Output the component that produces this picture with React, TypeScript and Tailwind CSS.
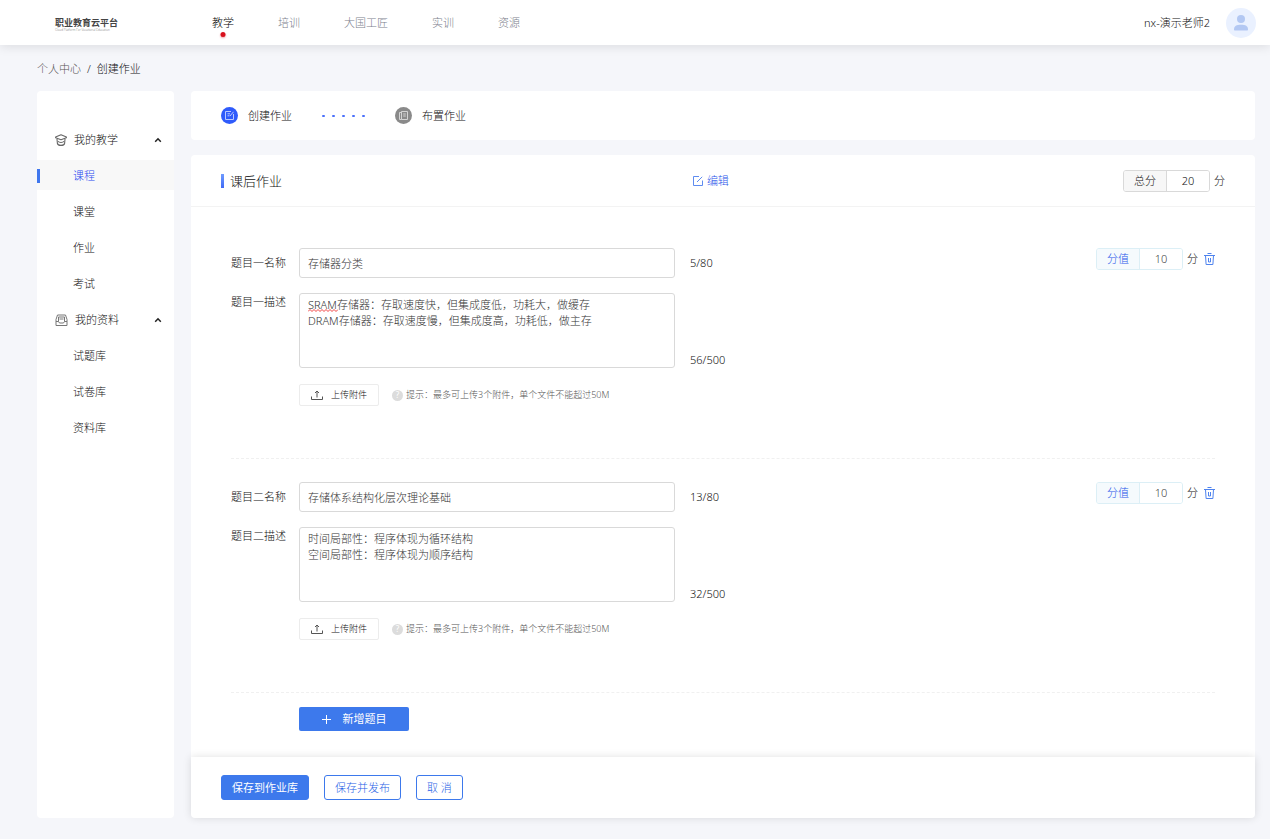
import React, { useState } from 'react';
import clsx from 'clsx';

type Question = {
  id: string;
  order: string;
  name: string;
  description: string;
  nameCount: number;
  descriptionCount: number;
  score: number;
  misspelled?: boolean;
};

const NAV = ['教学', '培训', '大国工匠', '实训', '资源'];

const MENU = [
  { title: '我的教学', icon: CapIcon, items: ['课程', '课堂', '作业', '考试'] },
  { title: '我的资料', icon: TrayIcon, items: ['试题库', '试卷库', '资料库'] },
];

const QUESTIONS: Question[] = [
  {
    id: 'q1',
    order: '一',
    name: '存储器分类',
    description: 'SRAM存储器：存取速度快，但集成度低，功耗大，做缓存\nDRAM存储器：存取速度慢，但集成度高，功耗低，做主存',
    nameCount: 5,
    descriptionCount: 56,
    score: 10,
    misspelled: true,
  },
  {
    id: 'q2',
    order: '二',
    name: '存储体系结构化层次理论基础',
    description: '时间局部性：程序体现为循环结构\n空间局部性：程序体现为顺序结构',
    nameCount: 13,
    descriptionCount: 32,
    score: 10,
  },
];

function CapIcon() {
  return (
    <svg width="12" height="12" viewBox="0 0 12 12" fill="none" stroke="#666" strokeWidth="1.1" aria-hidden="true">
      <path d="M6 .8 .6 3v.8L6 5.8l5.400-2V3z" strokeLinejoin="round" />
      <path d="M2 5l.4 4.500c.3 1.200 1.500 1.900 3.600 1.900s3.300-.7 3.600-1.900L10 5" />
      <path d="M3 7.300c.6.900 1.700 1.200 3 1.200s2.400-.3 3-1.200" />
    </svg>
  );
}

function TrayIcon() {
  return (
    <svg width="13" height="12" viewBox="0 0 13 12" fill="none" stroke="#777" strokeWidth="1" aria-hidden="true">
      <path d="M2.5 1h8L12 5.5v6H1v-6z" strokeLinejoin="round" />
      <path d="M1 7.5h2.5l1 1.5h4l1-1.5H12M3.5 3h6v4.5M3.5 3v4.5M4.5 5h4" />
    </svg>
  );
}

function TrashIcon() {
  return (
    <svg width="11" height="12" viewBox="0 0 11 12" fill="none" stroke="#4f83ee" strokeWidth="1" aria-hidden="true">
      <path d="M0 2.5h11M3.5.5h4M1.5 2.5l.6 9h6.800l.6-9M4.5 5v4M6.5 5v4M4.5 9h2" />
    </svg>
  );
}

function UploadIcon() {
  return (
    <svg width="12" height="11" viewBox="0 0 12 11" fill="none" stroke="#555" strokeWidth="1" aria-hidden="true">
      <path d="M.5 6.5v3h11v-3M6 7.5V1M4 3l2-2 2 2" />
    </svg>
  );
}

function Header() {
  return (
    <header className="relative flex h-[45px] items-center bg-white pr-[14px] pl-[55px] shadow-[0_2px_10px_rgba(0,0,0,0.1)]">
      <a href="#" className="flex w-[157px] flex-col pt-1">
        <span className="text-[9px] leading-[11px] font-bold text-[#444]">职业教育云平台</span>
        <span className="text-[3px] leading-[4px] text-[#777]">Cloud Platform For Vocational Education</span>
      </a>
      <nav className="flex gap-11">
        {NAV.map((label, i) => (
          <a key={label} href="#" className={clsx('relative', i === 0 ? 'text-black' : 'text-[#7c808c]')}>
            {label}
            {i === 0 && (
              <span className="absolute -bottom-1.5 left-1/2 size-[5px] -translate-x-1/2 rounded-full bg-[#d8101c] shadow-[0_1px_2px_rgba(216,16,28,0.4)]" />
            )}
          </a>
        ))}
      </nav>
      <span className="ml-auto text-[#111]">nx-演示老师2</span>
      <span className="ml-4 flex size-[30px] items-center justify-center rounded-full bg-[#eaf1ff]">
        <svg width="14" height="16" viewBox="0 0 14 16" fill="#b3c8f3" aria-hidden="true">
          <circle cx="7" cy="4" r="4" />
          <path d="M0 14.5C0 11 2.5 9.8 7 9.8s7 1.2 7 4.7c0 .6-.4 1-1 1H1c-.6 0-1-.4-1-1z" />
        </svg>
      </span>
    </header>
  );
}

function Sidebar() {
  const [active, setActive] = useState('课程');

  return (
    <aside className="w-[137px] shrink-0 rounded bg-white pt-[30px]">
      {MENU.map(({ title, icon: Icon, items }) => (
        <div key={title}>
          <button type="button" className="flex h-9 w-full items-center gap-[7px] pt-px pr-3 pl-[18px] text-[#111]">
            <Icon />
            {title}
            <svg className="ml-auto" width="8" height="6" viewBox="0 0 8 6" fill="none" stroke="#222" strokeWidth="1.5" aria-hidden="true">
              <path d="M1.2 4.8 4 1.8l2.8 3" />
            </svg>
          </button>
          <ul>
            {items.map((item) => (
              <li key={item} className="py-[3px]">
                <button
                  type="button"
                  onClick={() => setActive(item)}
                  className={clsx(
                    'flex h-[30px] w-full items-center gap-[33px] pt-px',
                    item === active ? 'bg-[#f8f8f8] text-[#1f48f0]' : 'text-[#111]'
                  )}
                >
                  <span className={clsx('h-[14px] w-[3px]', item === active && 'bg-[#3f76ee]')} />
                  {item}
                </button>
              </li>
            ))}
          </ul>
        </div>
      ))}
    </aside>
  );
}

function Steps() {
  return (
    <section className="flex h-[49px] items-center rounded bg-white px-[30px] text-[#111]">
      <span className="flex size-[17px] items-center justify-center rounded-full bg-[#2f5bfb]">
        <svg width="9" height="9" viewBox="0 0 9 9" fill="none" stroke="#b9c9ff" strokeWidth="1" aria-hidden="true">
          <path d="M6 .5H.5v8h8V3M2.5 2.8H5M2.5 4.8h2M5 5 8.5.8" />
        </svg>
      </span>
      <span className="ml-[10px]">创建作业</span>
      <span className="mx-[30px] flex gap-[7px]">
        {[0, 1, 2, 3, 4].map((i) => (
          <span key={i} className="h-[2px] w-[3px] rounded-[1px] bg-[#4a70fb]" />
        ))}
      </span>
      <span className="flex size-[17px] items-center justify-center rounded-full bg-[#8a8a8a]">
        <svg width="9" height="9" viewBox="0 0 9 9" fill="none" stroke="#d4d4d4" strokeWidth="1" aria-hidden="true">
          <path d="M2.5.5h6v8h-6zM2.5 1.5h-2v7h2M4.2 3h2.6M4.2 5h2.6" />
        </svg>
      </span>
      <span className="ml-[10px]">布置作业</span>
    </section>
  );
}

function ScoreField({ id, label, value, tone }: { id: string; label: string; value: number; tone: 'gray' | 'blue' }) {
  return (
    <div className="flex items-center gap-1 text-[#111]">
      <div
        className={clsx(
          'flex h-[22px] overflow-hidden rounded-[3px] border',
          tone === 'gray' ? 'border-[#d9d9d9]' : 'border-[#dceff6]'
        )}
      >
        <label
          htmlFor={id}
          className={clsx(
            'flex w-[43px] items-center justify-center border-r',
            tone === 'gray' ? 'border-[#d9d9d9] bg-[#f7f7f7]' : 'border-[#dceff6] bg-[#f5fafd] text-[#1f55ea]'
          )}
        >
          {label}
        </label>
        <input
          id={id}
          defaultValue={value}
          className={clsx('w-[42px] bg-white text-center outline-none', tone === 'blue' && 'text-[#444]')}
        />
      </div>
      <span>分</span>
    </div>
  );
}

function QuestionForm({ question }: { question: Question }) {
  const { id, order } = question;

  return (
    <div className="flex items-start justify-between border-b border-dashed border-[#f0f0f0] pt-[23px] pb-[52px] text-[#111]">
      <div className="grid grid-cols-[53px_376px_auto] gap-x-[15px]">
        <label htmlFor={`${id}-name`} className="self-center whitespace-nowrap">
          题目{order}名称
        </label>
        <input
          id={`${id}-name`}
          defaultValue={question.name}
          className="h-[30px] rounded-[3px] border border-[#d9d9d9] px-2 text-[#333] outline-none"
        />
        <span className="self-center">{question.nameCount}/80</span>

        <label htmlFor={`${id}-desc`} className="mt-4 whitespace-nowrap">
          题目{order}描述
        </label>
        <div className="relative mt-[15px] flex">
          <textarea
            id={`${id}-desc`}
            defaultValue={question.description}
            spellCheck={false}
            className="h-[75px] w-full resize-none rounded-[3px] border border-[#d9d9d9] px-2 py-[3px] text-[#333] outline-none"
          />
          {question.misspelled && (
            <svg className="absolute top-4 left-[9px]" width="30" height="3" viewBox="0 0 30 3" fill="none" stroke="#f04040" aria-hidden="true">
              <path d="M0 2.5 2 .5l2 2 2-2 2 2 2-2 2 2 2-2 2 2 2-2 2 2 2-2 2 2 2-2 2 2 2-2" />
            </svg>
          )}
        </div>
        <span className="self-end">{question.descriptionCount}/500</span>

        <div className="col-start-2 mt-4 flex items-center gap-[13px] text-[9px]">
          <button type="button" className="flex h-[22px] w-[80px] items-center justify-center gap-2 rounded-[2px] border border-[#ececec]">
            <UploadIcon />
            上传附件
          </button>
          <span className="flex items-center gap-[3px] whitespace-nowrap text-[#555]">
            <span className="flex size-[11px] items-center justify-center rounded-full bg-[#dcdcdc] text-[8px] leading-none font-normal text-white">?</span>
            提示：最多可上传3个附件，单个文件不能超过50M
          </span>
        </div>
      </div>

      <div className="flex items-center gap-[6px]">
        <ScoreField id={`${id}-score`} label="分值" value={question.score} tone="blue" />
        <button type="button" aria-label="删除">
          <TrashIcon />
        </button>
      </div>
    </div>
  );
}

export default function App() {
  return (
    <div className="min-h-screen bg-[#f5f6fa] font-['Noto_Sans','Noto_Sans_CJK_SC',sans-serif] text-[11px] leading-4 font-light">
      <Header />

      <div className="pt-4 pr-[15px] pb-[21px] pl-[37px]">
        <div className="flex gap-[6px] text-[#111]">
          <a href="#" className="text-[#555]">
            个人中心
          </a>
          <span className="text-[#333]">/</span>
          <span>创建作业</span>
        </div>

        <div className="mt-[14px] flex gap-[17px]">
          <Sidebar />

          <main className="min-w-0 flex-1">
            <Steps />

            <section className="mt-[15px] rounded-t bg-white">
              <div className="flex h-[52px] items-center border-b border-[#f3f3f3] px-[30px]">
                <div className="flex w-[47%] items-center gap-[6px]">
                  <span className="h-[14px] w-[3px] bg-linear-to-b from-[#6f9bff] to-[#4169f5]" />
                  <h1 className="text-[13px] font-light text-[#111]">课后作业</h1>
                </div>
                <a href="#" className="flex items-center gap-1 text-[#1f55ea]">
                  <svg width="10" height="10" viewBox="0 0 10 10" fill="none" stroke="#5f8cf0" strokeWidth="1" aria-hidden="true">
                    <path d="M6 .5H.5v9h9V4.5M4 6 9.2.8" />
                  </svg>
                  编辑
                </a>
                <div className="ml-auto">
                  <ScoreField id="total" label="总分" value={20} tone="gray" />
                </div>
              </div>

              {/* Questions */}
              <div className="px-10 pt-[18px] pb-[26px]">
                {QUESTIONS.map((q) => (
                  <QuestionForm key={q.id} question={q} />
                ))}
                <button
                  type="button"
                  className="mt-[14px] ml-[68px] flex h-6 w-[110px] items-center justify-center gap-3 rounded-[2px] bg-[#3d79ec] font-normal text-white"
                >
                  <svg width="9" height="9" viewBox="0 0 9 9" stroke="currentColor" aria-hidden="true">
                    <path d="M4.5 0v9M0 4.5h9" />
                  </svg>
                  新增题目
                </button>
              </div>
            </section>

            {/* Actions */}
            <footer className="relative flex gap-[15px] rounded-b bg-white px-[30px] py-[18px] shadow-[0_0_8px_rgba(0,0,0,0.12)]">
              <button type="button" className="h-[25px] rounded-[3px] border border-[#3d79ec] bg-[#3d79ec] px-[10px] font-normal text-white">
                保存到作业库
              </button>
              <button type="button" className="h-[25px] rounded-[3px] border border-[#3d79ec] px-[10px] text-[#1f5fe6]">
                保存并发布
              </button>
              <button type="button" className="h-[25px] rounded-[3px] border border-[#3d79ec] px-[10px] text-[#1f5fe6]">
                取 消
              </button>
            </footer>
          </main>
        </div>
      </div>
    </div>
  );
}
